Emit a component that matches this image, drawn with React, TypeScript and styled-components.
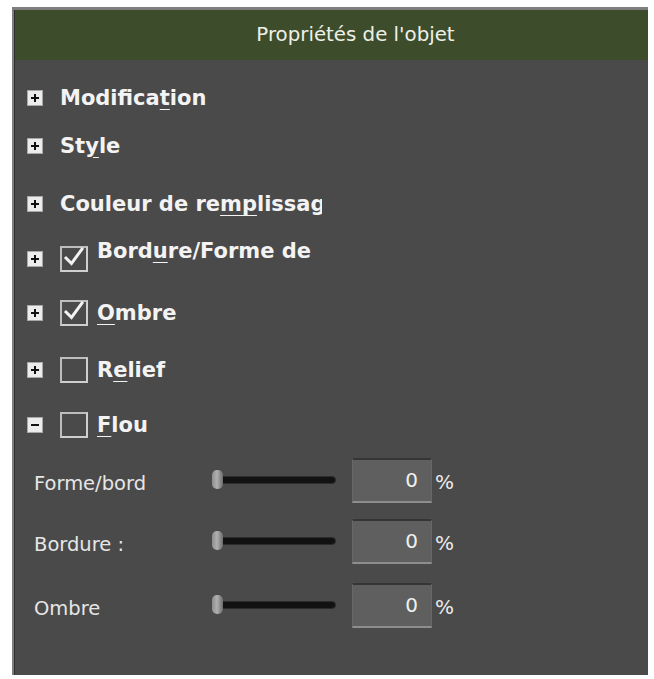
import React from "react";
import styled, { createGlobalStyle } from "styled-components";

const GlobalStyle = createGlobalStyle`
  html, body {
    margin: 0;
    padding: 0;
    background: #ffffff;
  }
  body {
    font-family: "DejaVu Sans", "Liberation Sans", sans-serif;
  }
`;

type Section = {
  id: string;
  label: React.ReactNode;
  open?: boolean;
  checkbox?: boolean;
  checked?: boolean;
  gap: number;
  raised?: boolean;
};

const sections: Section[] = [
  { id: "mod", label: <>Modifica<u>t</u>ion</>, gap: 18 },
  { id: "style", label: <>St<u>y</u>le</>, gap: 8 },
  { id: "fill", label: <>Couleur de re<u>mp</u>lissage</>, gap: 18 },
  {
    id: "border",
    label: <>Bord<u>u</u>re/Forme de l'objet</>,
    checkbox: true,
    checked: true,
    gap: 15,
    raised: true,
  },
  { id: "shadow", label: <><u>O</u>mbre</>, checkbox: true, checked: true, gap: 14 },
  { id: "relief", label: <>R<u>e</u>lief</>, checkbox: true, checked: false, gap: 17 },
  { id: "blur", label: <><u>F</u>lou</>, checkbox: true, checked: false, open: true, gap: 15 },
];

const blurFields = [
  { id: "shape", label: "Forme/bord", value: 0, gap: 12 },
  { id: "edge", label: "Bordure :", value: 0, gap: 15 },
  { id: "shadow", label: "Ombre", value: 0, gap: 18 },
];

const Expander = ({ open }: { open?: boolean }) => (
  <ExpanderBox viewBox="0 0 16 16">
    <rect x="0.5" y="0.5" width="15" height="15" fill="#ececec" stroke="#a8a8a8" />
    <path d="M4 8h8" stroke="#111" strokeWidth="2" />
    {!open && <path d="M8 4v8" stroke="#111" strokeWidth="2" />}
  </ExpanderBox>
);

const CheckBox = ({ checked }: { checked?: boolean }) => (
  <Check>
    {checked && (
      <svg width="26" height="26" viewBox="0 0 26 26">
        <polyline
          points="5,12 10.5,17.5 21,3"
          fill="none"
          stroke="#f2f2f2"
          strokeWidth="3"
          strokeLinecap="square"
        />
      </svg>
    )}
  </Check>
);

const App = () => {
  return (
    <>
      <GlobalStyle />
      <Panel>
        <Header>
          <Title>Propriétés de l'objet</Title>
        </Header>
        <Body>
          {sections.map((s) => (
            <Row key={s.id} $gap={s.gap}>
              <Expander open={s.open} />
              {s.checkbox && <CheckBox checked={s.checked} />}
              <SectionLabel $raised={s.raised}>{s.label}</SectionLabel>
            </Row>
          ))}
          {blurFields.map((f) => (
            <FieldRow key={f.id} $gap={f.gap}>
              <FieldLabel>{f.label}</FieldLabel>
              <Slider>
                <Track />
                <Knob />
              </Slider>
              <ValueBox>{f.value}</ValueBox>
              <Unit>%</Unit>
            </FieldRow>
          ))}
        </Body>
      </Panel>
    </>
  );
};

export default App;

const Panel = styled.div`
  margin: 7px 0 0 12px;
  width: 636px;
  height: 668px;
  box-sizing: border-box;
  background: #4a4a4a;
  border-top: 3px solid #7e7e7e;
  border-left: 2px solid #7e7e7e;
  box-shadow: inset 1px 0 0 #303030;
  display: flex;
  flex-direction: column;
  overflow: hidden;
`;

const Header = styled.div`
  height: 50px;
  flex-shrink: 0;
  background: #3d4c2b;
  display: flex;
  align-items: center;
  justify-content: center;
  padding-left: 48px;
  margin-left: 1px;
`;

const Title = styled.span`
  font-size: 19.8px;
  color: #eef0e8;
  line-height: 1;
`;

const Body = styled.div`
  display: flex;
  flex-direction: column;
  padding-left: 13px;
`;

const Row = styled.div<{ $gap: number }>`
  display: flex;
  align-items: center;
  height: 40px;
  margin-top: ${(p) => p.$gap}px;
`;

const ExpanderBox = styled.svg`
  width: 16px;
  height: 16px;
  flex-shrink: 0;
  margin-right: 17px;
`;

const Check = styled.span`
  width: 28px;
  height: 26px;
  box-sizing: border-box;
  border: 2px solid #cfcfcf;
  border-top-color: #bdbdbd;
  border-left-color: #bdbdbd;
  flex-shrink: 0;
  margin-right: 9px;
  display: flex;
  align-items: center;
  justify-content: center;
  svg {
    display: block;
    overflow: visible;
  }
`;

const SectionLabel = styled.span<{ $raised?: boolean }>`
  width: ${(p) => (p.$raised ? 218 : 262)}px;
  white-space: nowrap;
  overflow: hidden;
  font-weight: bold;
  font-size: 21px;
  line-height: 24px;
  color: #f3f3f3;
  align-self: ${(p) => (p.$raised ? "flex-start" : "center")};
  u {
    text-decoration-thickness: 2px;
    text-underline-offset: 4px;
  }
`;

const FieldRow = styled.div<{ $gap: number }>`
  display: flex;
  align-items: center;
  height: 46px;
  margin-top: ${(p) => p.$gap}px;
  padding-left: 7px;
`;

const FieldLabel = styled.span`
  width: 178px;
  font-size: 19.5px;
  color: #e6e6e6;
  padding-top: 7px;
`;

const Slider = styled.div`
  position: relative;
  width: 124px;
  height: 20px;
  margin-right: 16px;
  display: flex;
  align-items: center;
  padding-left: 3px;
  box-sizing: border-box;
`;

const Track = styled.div`
  flex: 1;
  height: 8px;
  box-sizing: border-box;
  background: #121212;
  border: 1px solid #2c2c2c;
  border-radius: 4px;
`;

const Knob = styled.div`
  position: absolute;
  left: 0;
  top: 0;
  width: 11px;
  height: 19px;
  border-radius: 5px;
  background: linear-gradient(90deg, #8e8e8e, #b0b0b0 45%, #6c6c6c);
`;

const ValueBox = styled.div`
  width: 80px;
  height: 45px;
  box-sizing: border-box;
  background: #5f5f5f;
  border-top: 2px solid #353535;
  border-bottom: 2px solid #8e8e8e;
  border-left: 1px solid #676767;
  border-right: 1px solid #676767;
  display: flex;
  align-items: center;
  justify-content: flex-end;
  padding-right: 13px;
  font-size: 20px;
  color: #f0f0f0;
`;

const Unit = styled.span`
  margin-left: 3px;
  font-size: 20px;
  color: #ececec;
  padding-top: 3px;
`;
